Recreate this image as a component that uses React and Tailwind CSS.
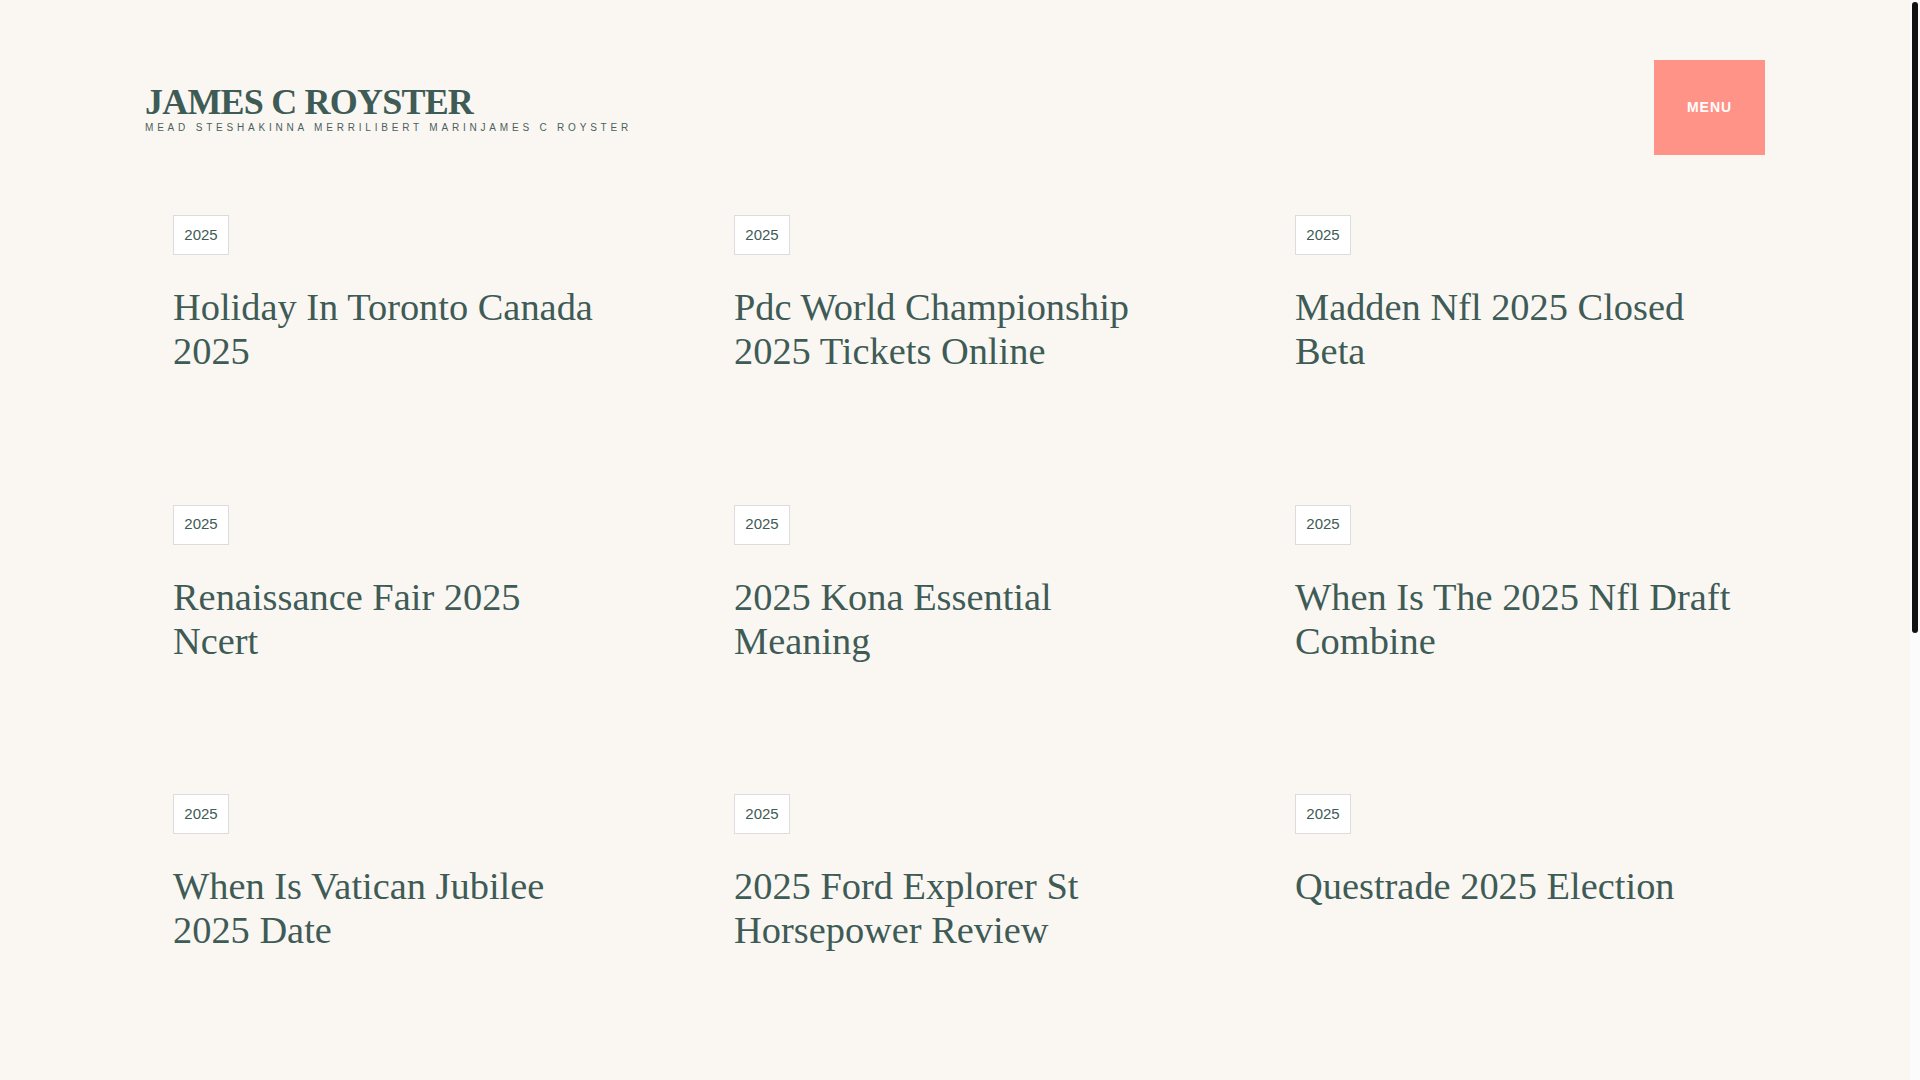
import React from 'react';

const posts = [
  'Holiday In Toronto Canada 2025',
  'Pdc World Championship 2025 Tickets Online',
  'Madden Nfl 2025 Closed Beta',
  'Renaissance Fair 2025 Ncert',
  '2025 Kona Essential Meaning',
  'When Is The 2025 Nfl Draft Combine',
  'When Is Vatican Jubilee 2025 Date',
  '2025 Ford Explorer St Horsepower Review',
  'Questrade 2025 Election',
];

const PostCard = ({ title }) => (
  <article className="flex flex-col items-start">
    <a
      href="#"
      className="flex h-[40px] w-[56px] items-center justify-center border border-[#dcdcdc] bg-white text-[15px] text-[#3f5b56] font-['Liberation_Sans',Arial,sans-serif]"
    >
      2025
    </a>
    <h2 className="mt-[30px] text-[38.4px] leading-[44px] text-[#3f5b56] font-['Liberation_Serif','Times_New_Roman',serif]">
      <a href="#">{title}</a>
    </h2>
  </article>
);

// page scrollbar as it shows in the screenshot (thin track, dark thumb)
const ScrollBar = () => (
  <div className="w-[10px] shrink-0 bg-[#fbfbfb] px-[2px] pt-[2px]">
    <div className="h-[631px] rounded-full bg-[#111111]" />
  </div>
);

const App = () => {
  return (
    <div className="flex h-screen overflow-hidden bg-[#faf7f3]">
      <div className="flex-1 overflow-hidden">
        <div className="px-[145px] pt-[60px] pb-[893px]">
          <header className="flex items-start justify-between">
            <div className="pt-[24px]">
              <h1 className="text-[36px] leading-none font-bold tracking-[-0.8px] text-[#3f5b56] font-['Liberation_Serif','Times_New_Roman',serif]">
                JAMES C ROYSTER
              </h1>
              <p className="mt-[2px] text-[10px] leading-[12px] tracking-[3.8px] text-[#4b605b] font-['Liberation_Sans',Arial,sans-serif]">
                MEAD STESHAKINNA MERRILIBERT MARINJAMES C ROYSTER
              </p>
            </div>
            <button
              type="button"
              className="flex h-[95px] w-[111px] items-center justify-center bg-[#ff9387] text-[14px] font-bold tracking-[1px] text-white font-['Liberation_Sans',Arial,sans-serif]"
            >
              MENU
            </button>
          </header>

          <main className="mt-[60px] pl-[28px]">
            <div className="grid grid-cols-[repeat(3,440px)] gap-x-[121px] gap-y-[131.5px]">
              {posts.map((title) => (
                <PostCard key={title} title={title} />
              ))}
            </div>
          </main>
        </div>
      </div>
      <ScrollBar />
    </div>
  );
};

export default App;
